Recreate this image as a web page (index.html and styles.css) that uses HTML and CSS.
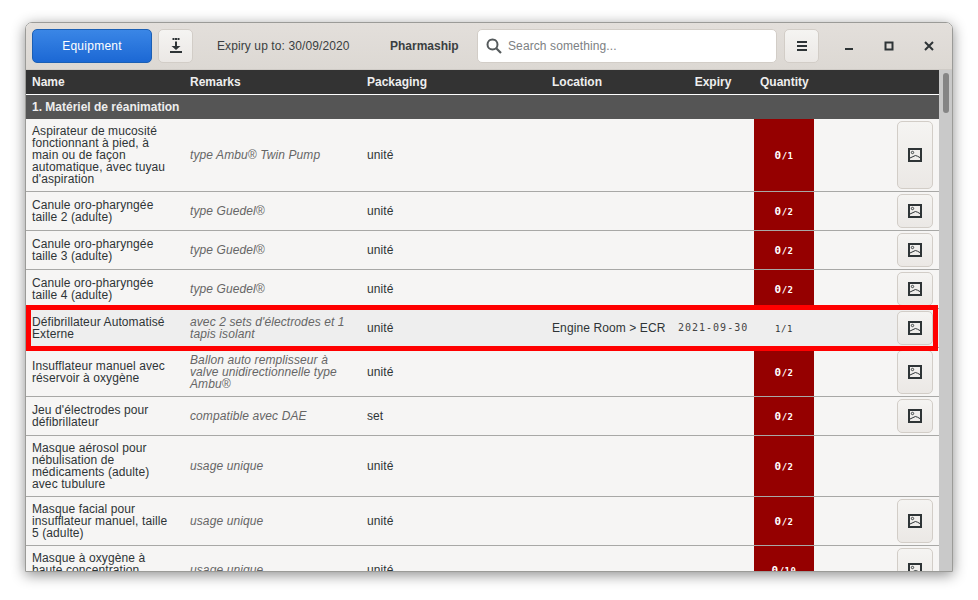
FILE: index.html
```html
<!DOCTYPE html>
<html lang="en">
<head>
    <meta charset="UTF-8">
    <meta name="viewport" content="width=device-width, initial-scale=1.0">
    <title>Pharmaship</title>
    <link rel="stylesheet" href="styles.css">
</head>
<body>
    <svg class="sprite" width="0" height="0">
        <symbol id="picture" viewBox="0 0 14 14">
            <rect x="1" y="1" width="12" height="12" fill="none" stroke="currentColor" stroke-width="2"/>
            <circle cx="4.5" cy="4.5" r="1.2" fill="none" stroke="currentColor" stroke-width="0.9"/>
            <path d="M2 10 L5 8.6 Q7.5 6.6 9.5 8.2 L12 9.6" fill="none" stroke="currentColor" stroke-width="1"/>
        </symbol>
    </svg>

    <div class="window">
        <header class="toolbar">
            <button class="btn btn-primary">Equipment</button>
            <button class="btn btn-icon">
                <svg width="12" height="15" viewBox="0 0 12 15">
                    <rect x="2.500" y="0" width="2" height="2" fill="#2e3436"/>
                    <rect x="5" y="0" width="2" height="2" fill="#2e3436"/>
                    <rect x="7.500" y="0" width="2" height="2" fill="#2e3436"/>
                    <path d="M5 3.500h2v4.500h3.500l-4.500 4-4.500-4h3.500z" fill="#2e3436"/>
                    <rect x="0" y="13" width="12" height="2" fill="#2e3436"/>
                </svg>
            </button>
            <span class="expiry-limit">Expiry up to: 30/09/2020</span>
            <span class="vessel">Pharmaship</span>
            <label class="search">
                <svg width="16" height="16" viewBox="0 0 16 16">
                    <circle cx="6.5" cy="6.5" r="5" fill="none" stroke="#555a5c" stroke-width="2"/>
                    <path d="M10.2 10.2 L15 15" stroke="#555a5c" stroke-width="2.2"/>
                </svg>
                <input type="text" placeholder="Search something...">
            </label>
            <button class="btn btn-icon">
                <svg width="14" height="12" viewBox="0 0 14 12">
                    <path d="M1 2h10M1 6h10M1 10h10" stroke="#2e3436" stroke-width="2" fill="none" transform="translate(1 0)"/>
                </svg>
            </button>
            <div class="window-controls">
                <svg width="12" height="12" viewBox="0 0 12 12"><rect x="2" y="8" width="8" height="2" fill="#2e3436"/></svg>
                <svg width="12" height="12" viewBox="0 0 12 12"><rect x="2.5" y="2.5" width="7" height="7" fill="none" stroke="#2e3436" stroke-width="2"/></svg>
                <svg width="12" height="12" viewBox="0 0 12 12"><path d="M2 2l8 8M10 2l-8 8" stroke="#2e3436" stroke-width="2" fill="none"/></svg>
            </div>
        </header>

        <div class="content">
            <div class="table-scroll">
                <table class="equipment">
                    <colgroup>
                        <col class="col-name">
                        <col class="col-remarks">
                        <col class="col-packaging">
                        <col class="col-location">
                        <col class="col-expiry">
                        <col class="col-quantity">
                        <col class="col-action">
                    </colgroup>
                    <thead>
                        <tr>
                            <th>Name</th>
                            <th>Remarks</th>
                            <th>Packaging</th>
                            <th>Location</th>
                            <th class="center">Expiry</th>
                            <th class="center">Quantity</th>
                            <th></th>
                        </tr>
                    </thead>
                    <tbody>
                        <tr class="group"><td colspan="7">1. Matériel de réanimation</td></tr>
                        <tr>
                            <td class="name">Aspirateur de mucosité fonctionnant à pied, à main ou de façon automatique, avec tuyau d'aspiration</td>
                            <td class="remarks">type Ambu® Twin Pump</td>
                            <td>unité</td><td></td><td></td>
                            <td class="qty empty"><b>0</b>/1</td>
                            <td class="action"><button class="btn btn-picture"><svg width="14" height="14"><use href="#picture"/></svg></button></td>
                        </tr>
                        <tr>
                            <td class="name">Canule oro-pharyngée taille 2 (adulte)</td>
                            <td class="remarks">type Guedel®</td>
                            <td>unité</td><td></td><td></td>
                            <td class="qty empty"><b>0</b>/2</td>
                            <td class="action"><button class="btn btn-picture"><svg width="14" height="14"><use href="#picture"/></svg></button></td>
                        </tr>
                        <tr>
                            <td class="name">Canule oro-pharyngée taille 3 (adulte)</td>
                            <td class="remarks">type Guedel®</td>
                            <td>unité</td><td></td><td></td>
                            <td class="qty empty"><b>0</b>/2</td>
                            <td class="action"><button class="btn btn-picture"><svg width="14" height="14"><use href="#picture"/></svg></button></td>
                        </tr>
                        <tr>
                            <td class="name">Canule oro-pharyngée taille 4 (adulte)</td>
                            <td class="remarks">type Guedel®</td>
                            <td>unité</td><td></td><td></td>
                            <td class="qty empty"><b>0</b>/2</td>
                            <td class="action"><button class="btn btn-picture"><svg width="14" height="14"><use href="#picture"/></svg></button></td>
                        </tr>
                        <tr class="selected">
                            <td class="name">Défibrillateur Automatisé Externe</td>
                            <td class="remarks">avec 2 sets d'électrodes et 1 tapis isolant</td>
                            <td>unité</td>
                            <td>Engine Room &gt; ECR</td>
                            <td class="date">2021-09-30</td>
                            <td class="qty">1/1</td>
                            <td class="action"><button class="btn btn-picture"><svg width="14" height="14"><use href="#picture"/></svg></button></td>
                        </tr>
                        <tr>
                            <td class="name">Insufflateur manuel avec réservoir à oxygène</td>
                            <td class="remarks">Ballon auto remplisseur à valve unidirectionnelle type Ambu®</td>
                            <td>unité</td><td></td><td></td>
                            <td class="qty empty"><b>0</b>/2</td>
                            <td class="action"><button class="btn btn-picture"><svg width="14" height="14"><use href="#picture"/></svg></button></td>
                        </tr>
                        <tr>
                            <td class="name">Jeu d'électrodes pour défibrillateur</td>
                            <td class="remarks">compatible avec DAE</td>
                            <td>set</td><td></td><td></td>
                            <td class="qty empty"><b>0</b>/2</td>
                            <td class="action"><button class="btn btn-picture"><svg width="14" height="14"><use href="#picture"/></svg></button></td>
                        </tr>
                        <tr>
                            <td class="name">Masque aérosol pour nébulisation de médicaments (adulte) avec tubulure</td>
                            <td class="remarks">usage unique</td>
                            <td>unité</td><td></td><td></td>
                            <td class="qty empty"><b>0</b>/2</td>
                            <td class="action"></td>
                        </tr>
                        <tr>
                            <td class="name">Masque facial pour insufflateur manuel, taille 5 (adulte)</td>
                            <td class="remarks">usage unique</td>
                            <td>unité</td><td></td><td></td>
                            <td class="qty empty"><b>0</b>/2</td>
                            <td class="action"><button class="btn btn-picture"><svg width="14" height="14"><use href="#picture"/></svg></button></td>
                        </tr>
                        <tr>
                            <td class="name">Masque à oxygène à haute concentration<br>&nbsp;</td>
                            <td class="remarks">usage unique</td>
                            <td>unité</td><td></td><td></td>
                            <td class="qty empty"><b>0</b>/10</td>
                            <td class="action"><button class="btn btn-picture"><svg width="14" height="14"><use href="#picture"/></svg></button></td>
                        </tr>
                    </tbody>
                </table>
            </div>
            <div class="scrollbar"><div class="thumb"></div></div>
        </div>
    </div>
</body>
</html>
```

FILE: styles.css
```css
* {
    box-sizing: border-box;
}
html, body {
    height: 100%;
    overflow: hidden;
}
body {
    margin: 0;
    padding: 22px 25px 28px 25px;
    background-color: #fff;
    font-family: "Liberation Sans", Arial, sans-serif;
    font-size: 12px;
    letter-spacing: 0.1px;
    color: #2e3436;
}
.sprite {
    position: absolute;
}
.window {
    display: flex;
    flex-direction: column;
    width: 928px;
    height: 550px;
    border: 1px solid #9b9b98;
    border-radius: 7px 7px 0 0;
    overflow: hidden;
    box-shadow: 0 3px 14px rgba(0, 0, 0, 0.45);
}

/* toolbar */
.toolbar {
    display: flex;
    align-items: center;
    height: 47px;
    flex: none;
    padding: 0 6px 1px 6px;
    background: linear-gradient(#e3dfdb, #dcd8d3);
    border-bottom: 1px solid #cfcbc6;
}
.btn {
    display: flex;
    align-items: center;
    justify-content: center;
    padding: 0;
    border: 1px solid #d2cdc7;
    border-radius: 5px;
    background: linear-gradient(#f5f4f2, #ebe8e5);
    font: inherit;
    letter-spacing: inherit;
    color: #2e3436;
}
.btn-primary {
    width: 120px;
    height: 34px;
    border-color: #1b5fb4;
    background: linear-gradient(#3a86e6, #1c68d4);
    color: #fff;
    letter-spacing: 0.25px;
}
.btn-icon {
    width: 35px;
    height: 34px;
    margin-left: 6px;
}
.expiry-limit {
    margin-left: 24px;
    width: 173px;
    flex: none;
    color: #3a3f41;
}
.vessel {
    width: 87px;
    flex: none;
    font-weight: bold;
    letter-spacing: 0;
    color: #3a3f41;
}
.search {
    display: flex;
    align-items: center;
    gap: 6px;
    width: 300px;
    height: 34px;
    margin-right: 1px;
    padding-left: 8px;
    border: 1px solid #d2cdc7;
    border-radius: 5px;
    background-color: #fff;
}
.search input {
    flex: 1;
    min-width: 0;
    padding: 0;
    border: none;
    outline: none;
    background: none;
    font: inherit;
    letter-spacing: inherit;
}
.search input::placeholder {
    color: #7d8183;
    opacity: 1;
}
.window-controls {
    display: flex;
    gap: 28px;
    margin-left: 24px;
}

/* table */
.content {
    display: flex;
    flex: 1;
    min-height: 0;
}
.table-scroll {
    flex: 1;
    min-width: 0;
    overflow: hidden;
    background-color: #f6f5f4;
}
.equipment {
    width: 913px;
    table-layout: fixed;
    border-collapse: separate;
    border-spacing: 0;
    line-height: 12px;
}
.col-name { width: 158px; }
.col-remarks { width: 177px; }
.col-packaging { width: 185px; }
.col-location { width: 126px; }
.col-expiry { width: 82px; }
.col-quantity { width: 60px; }
.col-action { width: 125px; }

.equipment th {
    height: 25px;
    padding: 0 6px;
    background-color: #333;
    border-bottom: 1px solid #fff;
    color: #eee;
    font-weight: bold;
    letter-spacing: 0;
    text-align: left;
}
.equipment th.center {
    text-align: center;
}
.equipment td {
    padding: 6px;
    border-bottom: 1px solid #a8a8a6;
    vertical-align: middle;
    color: #2e3436;
}
.equipment .name {
    padding-right: 16px;
}
.equipment .group td {
    height: 24px;
    padding: 0 6px;
    background-color: #555;
    border-bottom: none;
    color: #eee;
    font-weight: bold;
    letter-spacing: 0;
}
.equipment .remarks {
    color: #666;
    font-style: italic;
}
.equipment .date {
    padding: 0 0 0 6px;
    font-family: "DejaVu Sans Mono", monospace;
    font-size: 10px;
    letter-spacing: 1px;
    white-space: nowrap;
    color: #444;
}
.equipment .qty {
    padding: 2px 0 0 0;
    text-align: center;
    font-family: "DejaVu Sans Mono", monospace;
    font-size: 9px;
    letter-spacing: 0.5px;
}
.equipment .qty b {
    font-size: 11px;
}
.equipment .qty.empty {
    background-color: #950000;
    color: #fff;
    font-weight: bold;
}
.equipment td.action {
    height: 1px;
    padding: 2px 6px 2px 0;
}
.btn-picture {
    width: 36px;
    height: 100%;
    min-height: 34px;
    margin-left: auto;
}
.selected {
    position: relative;
}
.equipment .selected td {
    background-color: #eee;
}
.selected::after {
    content: "";
    position: absolute;
    top: -4px;
    bottom: -3px;
    left: 0;
    right: 1px;
    border: 5px solid #f00;
    pointer-events: none;
}

.scrollbar {
    flex: none;
    width: 13px;
    padding: 3px 4px;
    background-color: #c9c9c9;
}
.thumb {
    width: 6px;
    height: 40px;
    border-radius: 3px;
    background-color: #858585;
}
```
